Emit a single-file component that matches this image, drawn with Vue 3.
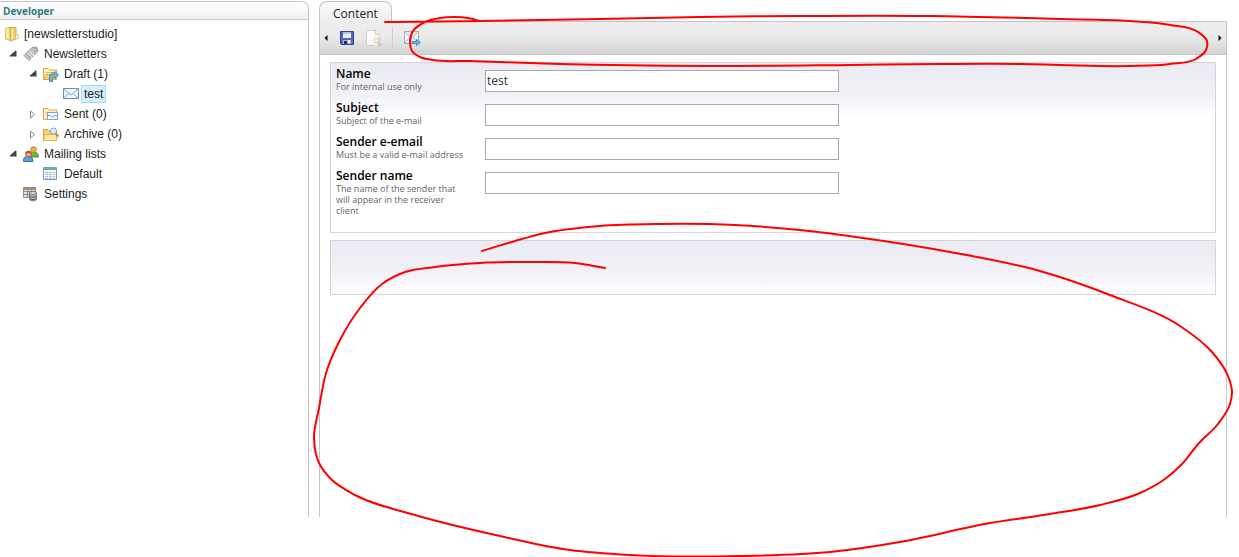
<script setup>
import { ref } from 'vue'

const tree = [
  { label: '[newsletterstudio]', depth: 0, icon: 'root' },
  { label: 'Newsletters', depth: 1, icon: 'tag', state: 'open' },
  { label: 'Draft (1)', depth: 2, icon: 'draft', state: 'open' },
  { label: 'test', depth: 3, icon: 'mail', selected: true },
  { label: 'Sent (0)', depth: 2, icon: 'sent', state: 'closed' },
  { label: 'Archive (0)', depth: 2, icon: 'archive', state: 'closed' },
  { label: 'Mailing lists', depth: 1, icon: 'people', state: 'open' },
  { label: 'Default', depth: 2, icon: 'table' },
  { label: 'Settings', depth: 1, icon: 'settings' }
]

const fields = ref([
  { id: 'name', label: 'Name', help: 'For internal use only', value: 'test' },
  { id: 'subject', label: 'Subject', help: 'Subject of the e-mail', value: '' },
  { id: 'email', label: 'Sender e-email', help: 'Must be a valid e-mail address', value: '' },
  { id: 'sender', label: 'Sender name', help: 'The name of the sender that will appear in the receiver client', value: '' }
])

// Smooth curve through a list of points; tangents are weighted by segment length
function curve(p) {
  const dist = (a, b) => Math.hypot(b[0] - a[0], b[1] - a[1])
  const tangent = (i) => {
    if (i === 0 || i === p.length - 1) {
      const a = p[i === 0 ? 0 : i - 1]
      const b = p[i === 0 ? 1 : i]
      const l = dist(a, b)
      return [(b[0] - a[0]) / l, (b[1] - a[1]) / l]
    }
    const l1 = dist(p[i - 1], p[i])
    const l2 = dist(p[i], p[i + 1])
    return [0, 1].map(
      (k) => (((p[i][k] - p[i - 1][k]) / l1) * l2 + ((p[i + 1][k] - p[i][k]) / l2) * l1) / (l1 + l2)
    )
  }
  let d = `M${p[0][0]} ${p[0][1]}`
  for (let i = 0; i < p.length - 1; i++) {
    const b = p[i]
    const c = p[i + 1]
    const l = dist(b, c) / 3
    const s = tangent(i)
    const t = tangent(i + 1)
    d += `C${b[0] + s[0] * l} ${b[1] + s[1] * l} ${c[0] - t[0] * l} ${c[1] - t[1] * l} ${c[0]} ${c[1]}`
  }
  return d
}

const strokes = [
  curve([[385, 22], [480, 21], [600, 19], [700, 17], [800, 16], [930, 16], [1060, 19], [1130, 21], [1170, 25], [1198, 32], [1207, 41], [1206, 50], [1196, 59], [1170, 64], [1130, 66], [1060, 65], [1020, 64], [940, 64], [850, 65], [705, 66], [560, 64], [470, 61], [433, 60], [420, 57], [412, 51], [410, 42], [413, 31], [425, 22], [440, 18], [455, 17], [468, 18], [480, 21]]),
  curve([[482, 251], [515, 241], [545, 233], [600, 226], [660, 224], [735, 225], [800, 230], [870, 239], [950, 252], [1040, 271], [1110, 295], [1180, 326], [1212, 352], [1228, 376], [1232, 392], [1230, 404], [1218, 424], [1199, 443], [1182, 464], [1165, 479], [1140, 493], [1100, 505], [1050, 514], [990, 523], [900, 542], [830, 552], [740, 556], [630, 555], [570, 550], [500, 536], [415, 515], [355, 495], [332, 480], [319, 463], [314, 438], [319, 408], [327, 370], [340, 340], [360, 308], [382, 284], [405, 272], [435, 267], [480, 263], [530, 262], [575, 263], [605, 268]])
]
</script>

<template>
  <div class="page">
    <aside class="side">
      <h1 class="side-title">Developer</h1>
      <ul class="tree">
        <li v-for="n in tree" :key="n.label" class="node" :class="'depth-' + n.depth">
          <span v-if="n.depth" class="toggle">
            <svg v-if="n.state === 'open'" width="8" height="8" viewBox="0 0 8 8"><path d="M6.500 .5 7.500 1v5.500H1L.5 6z" fill="#444" /></svg>
            <svg v-else-if="n.state === 'closed'" width="7" height="9" viewBox="0 0 7 9"><path d="M1.500 1v7l4-3.500z" fill="#fff" stroke="#8b8b8b" /></svg>
          </span>
          <svg class="icon" width="16" height="16" viewBox="0 0 16 16">
            <g v-if="n.icon === 'root'">
              <path d="M1.500 2.500 6 1v13.500L1.500 13z" fill="#fbeaa6" stroke="#e0c05c" />
              <path d="M6 1.500h6V13L6.500 15z" fill="#edd070" stroke="#d2b04a" />
              <path d="M8.500 3v10" stroke="#fff3bd" />
              <path d="M12.500 8.500H14V13h-1.500" fill="#fff" stroke="#d9bf62" />
            </g>
            <g v-else-if="n.icon === 'tag'">
              <path d="M9 1.500 13.500 1 15 5 6 14.500 1 9.500z" fill="#c5c8ca" stroke="#909497" />
              <path d="m5 8 4 4M7 6l4 4" stroke="#eef0f1" />
              <path d="m4.500 9 3 3" stroke="#74787b" />
              <circle cx="12" cy="3.500" r="1.300" fill="#fff" stroke="#8a8d90" />
            </g>
            <g v-else-if="n.icon === 'draft'">
              <path d="M.5 13.500v-11H5L6.500 4h7v9.500z" fill="#fff0bd" stroke="#dfa748" />
              <path d="M2.500 6.500h9" stroke="#dfb75f" />
              <path d="m1 13.500 2-5h11l-2 5z" fill="#fbd67a" stroke="#dda63c" />
              <path d="M6.500 15.500C5.500 10 7.500 6.500 12 7V5.500l3.500 3.500-3.500 3.500V11c-2 0-3 1.500-2.500 4.500z" fill="#7fb0cb" stroke="#4d88a8" />
            </g>
            <g v-else-if="n.icon === 'mail'">
              <path d="M.5 2.500h15v10H.5z" fill="#f4f9ff" stroke="#5f8fc9" />
              <path d="m1 3 7 6 7-6M1 12l5-4.500M15 12l-5-4.500" fill="none" stroke="#7ca6d8" />
            </g>
            <g v-else-if="n.icon === 'sent'">
              <path d="M.5 13.500v-11H5L6.500 4h7v9.500z" fill="#ffefb9" stroke="#dfa748" />
              <path d="M2.500 6.500h9" stroke="#e3b961" />
              <path d="M4.500 6.500h10v7h-10z" fill="#f6faff" stroke="#7ba3d3" />
              <path d="M5 9.500h2.500c0 2 4 2 4 0H14" fill="none" stroke="#7ba3d3" />
            </g>
            <g v-else-if="n.icon === 'archive'">
              <path d="M.5 14.500v-11H5L6.500 5h7v9.500z" fill="#fbd071" stroke="#e0a040" />
              <path d="M1 8.500h12.500v6H1z" fill="#ffe9a6" stroke="#e5ae4e" />
              <path d="m12.500 7.500 3 3" stroke="#c08a58" stroke-width="2" />
              <circle cx="10.500" cy="5" r="3" fill="#dff1ff" stroke="#79a9d9" />
            </g>
            <g v-else-if="n.icon === 'people'">
              <path d="M7.500 11c0-4 1-5 3.500-5s4.500 1.500 4.500 5z" fill="#72b63c" stroke="#4f912d" />
              <circle cx="10.500" cy="3.500" r="2.800" fill="#efb06a" stroke="#c08a30" />
              <path d="M7.800 3c0-3 5.500-3 5.600 0-2-1-3.500-1-5.600 0z" fill="#d09a30" />
              <path d="M.5 15.500c0-4 1-5 4.500-5s5 1.500 5 5z" fill="#5a9de0" stroke="#2f70b8" />
              <circle cx="5.500" cy="8" r="2.900" fill="#f1ad74" stroke="#b05c38" />
              <path d="M2.500 8c0-4 6-4 6 0-2-1.500-4-1.500-6 0z" fill="#a85030" />
            </g>
            <g v-else-if="n.icon === 'table'">
              <path d="M.5 1.500h13v12H.5z" fill="#f5faff" stroke="#6f9fcb" />
              <path d="M1 3h12" stroke="#7bb083" stroke-width="2" />
              <path d="M2 6.500h10M2 8.500h10M2 10.500h10M2 12.500h10" stroke="#9abbe0" />
              <path d="M5.500 5v8M9.500 5v8" stroke="#fff" />
            </g>
            <g v-else>
              <path d="M.5 1.500h12v10H.5z" fill="#e1e1e1" stroke="#8c8c8c" />
              <path d="M1 3h11" stroke="#b88965" stroke-width="2" />
              <path d="M1 5.500h11M1 8.500h11M4.500 2v9M8.500 2v9" stroke="#8c8c8c" />
              <path d="M6.500 7v6c0 2.500 7 2.500 7 0V7z" fill="#b5b5b5" stroke="#777" />
              <ellipse cx="10" cy="7" rx="3.500" ry="1.500" fill="#dcdcdc" stroke="#777" />
              <path d="M7 10c0 1.500 6 1.500 6 0M7 12.500c0 1.500 6 1.500 6 0" fill="none" stroke="#555" />
            </g>
          </svg>
          <a href="#" class="node-label" :class="{ selected: n.selected }">{{ n.label }}</a>
        </li>
      </ul>
    </aside>

    <main class="main">
      <div class="tabs"><button type="button" class="tab">Content</button></div>
      <div class="body">
        <div class="toolbar">
          <button type="button" class="scroll" aria-label="Scroll left">
            <svg width="4" height="6" viewBox="0 0 4 6"><path d="M3.500 0v6L.5 3z" /></svg>
          </button>
          <div class="tools">
            <button type="button" class="tool" aria-label="Save">
              <svg width="16" height="16" viewBox="0 0 16 16">
                <path d="M1.500 1.500h13v13h-12l-1-1z" fill="#5264cc" stroke="#343f9c" />
                <path d="M4 2h8v6H4z" fill="#eef4ff" />
                <path d="M4 3h8" stroke="#aac2ee" stroke-width="2" />
                <path d="M4 10h8v4H4z" fill="#a9b6cc" />
                <path d="M5 11h3v3H5z" fill="#242b59" />
                <path d="M9 10h2v3H9z" fill="#fff" />
              </svg>
            </button>
            <button type="button" class="tool" aria-label="Preview">
              <svg width="17" height="16" viewBox="0 0 17 16">
                <path d="M1.500.500h9l4 4v11h-13z" fill="#fafafa" stroke="#cfcfcf" />
                <path d="M10.500.500v4h4" fill="#eee" stroke="#cfcfcf" />
                <path d="m13 12.500 3 3" stroke="#dfba90" stroke-width="2" />
                <circle cx="11.500" cy="10.500" r="2.500" fill="#f6f3ee" stroke="#e3c29b" />
              </svg>
            </button>
            <span class="divider"></span>
            <button type="button" class="tool" aria-label="Send">
              <svg width="18" height="16" viewBox="0 0 18 16">
                <path d="M1.500 1.500h14v12h-14z" fill="#f0f4f3" stroke="#9bb0b5" />
                <path d="m2 2 6.500 6L15 2M2 13l5-6M15 13l-5-6" fill="none" stroke="#a9bdc1" />
                <path d="M9.500 11.500h4v-2l4 3-4 3v-2h-4z" fill="#6eb9e9" stroke="#398fc7" />
              </svg>
            </button>
          </div>
          <button type="button" class="scroll" aria-label="Scroll right">
            <svg width="4" height="6" viewBox="0 0 4 6"><path d="M.5 0v6l3-3z" /></svg>
          </button>
        </div>
        <form class="panel">
          <div v-for="f in fields" :key="f.id" class="field">
            <label :for="f.id" class="caption">
              <span class="caption-name">{{ f.label }}</span>
              <small class="caption-help">{{ f.help }}</small>
            </label>
            <input :id="f.id" v-model="f.value" type="text" class="input" />
          </div>
        </form>
        <section class="panel empty"></section>
      </div>
    </main>

    <svg class="ink" width="1239" height="557" viewBox="0 0 1239 557">
      <path v-for="(d, i) in strokes" :key="i" :d="d" />
    </svg>
  </div>
</template>

<style>
body {
  background: #fff;
}
</style>

<style scoped>
.page {
  position: relative;
  box-sizing: border-box;
  min-height: 100vh;
  display: grid;
  grid-template-columns: 309px minmax(0, 1fr);
  column-gap: 10px;
  padding: 1px 12px 40px 0;
  overflow: hidden;
  font-family: "Trebuchet MS", "Open Sans", "Noto Sans", sans-serif;
}
.side {
  border-right: 1px solid #c4c4c4;
  border-top: 1px solid #c4c4c4;
  border-top-right-radius: 8px;
  overflow: hidden;
}
.side-title {
  margin: 0;
  padding-left: 3px;
  height: 17px;
  line-height: 19px;
  font-size: 10px;
  font-weight: 700;
  color: #2f7b80;
  background: linear-gradient(#fff, #f0f0f0);
  border-bottom: 1px solid #c9c9c9;
}
.tree {
  list-style: none;
  margin: 0;
  padding: 4px 0 0 4px;
  font: 12px/20px "Liberation Sans", Arial, sans-serif;
}
.node {
  display: flex;
  align-items: center;
  height: 20px;
}
.depth-2 {
  padding-left: 20px;
}
.depth-3 {
  padding-left: 40px;
}
.toggle {
  display: flex;
  align-items: center;
  width: 14px;
  padding-left: 5px;
}
.icon {
  flex: none;
}
.node-label {
  margin-left: 2px;
  padding: 0 2px;
  border: 1px solid transparent;
  line-height: 16px;
  color: #222;
  text-decoration: none;
}
.depth-0 .node-label {
  margin-left: 1px;
}
.selected {
  background: #d5effc;
  border-color: #99defd;
}
.main {
  display: flex;
  flex-direction: column;
}
.tabs {
  display: flex;
  height: 20px;
}
.tab {
  box-sizing: border-box;
  height: 21px;
  padding: 3px 13px 0;
  border: 1px solid #c4c4c4;
  border-bottom: 0;
  border-radius: 8px 8px 0 0;
  background: linear-gradient(#fbfbfb, #ededed);
  font: 12px/18px "Trebuchet MS", "Open Sans", "Noto Sans", sans-serif;
  color: #222;
  z-index: 1;
}
.body {
  flex: 1;
  border: 1px solid #c4c4c4;
  border-bottom: 0;
}
.toolbar {
  display: flex;
  align-items: center;
  height: 32px;
  padding: 0 4px;
  background: linear-gradient(#eee, #e9e9e9 50%, #d3d3d3);
  border-bottom: 1px solid #c4c4c4;
}
.scroll,
.tool {
  display: flex;
  padding: 0;
  border: 0;
  background: none;
}
.tools {
  display: flex;
  flex: 1;
  align-items: center;
  gap: 10px;
  padding-left: 11px;
}
.divider {
  width: 1px;
  height: 21px;
  background: #c9c9f0;
}
.panel {
  margin: 7px 10px 0;
  padding: 4px 5px 16px;
  border: 1px solid #d5d5d5;
  background: linear-gradient(#e9eaf2, #f2f1f8 32px, #fff 56px);
}
.empty {
  height: 33px;
}
.field {
  display: grid;
  grid-template-columns: 130px 354px;
  column-gap: 19px;
  align-items: start;
  margin-bottom: 9px;
}
.field:last-child {
  margin-bottom: 0;
}
.caption-name,
.caption-help {
  display: block;
}
.caption-name {
  font-size: 12px;
  line-height: 14px;
  font-weight: 600;
  color: #000;
}
.caption-help {
  font-size: 9px;
  line-height: 11px;
  color: #666;
}
.input {
  box-sizing: border-box;
  width: 100%;
  height: 22px;
  margin: 3px 0 0;
  padding: 0 1px 1px;
  border: 1px solid #a9a9ad;
  background: #fff;
  font: 12px "Trebuchet MS", "Open Sans", "Noto Sans", sans-serif;
  color: #333;
}
.ink {
  position: absolute;
  top: 0;
  left: 0;
  pointer-events: none;
  z-index: 2;
}
.ink path {
  fill: none;
  stroke: #f00;
  stroke-width: 2;
  stroke-linecap: round;
}
</style>
